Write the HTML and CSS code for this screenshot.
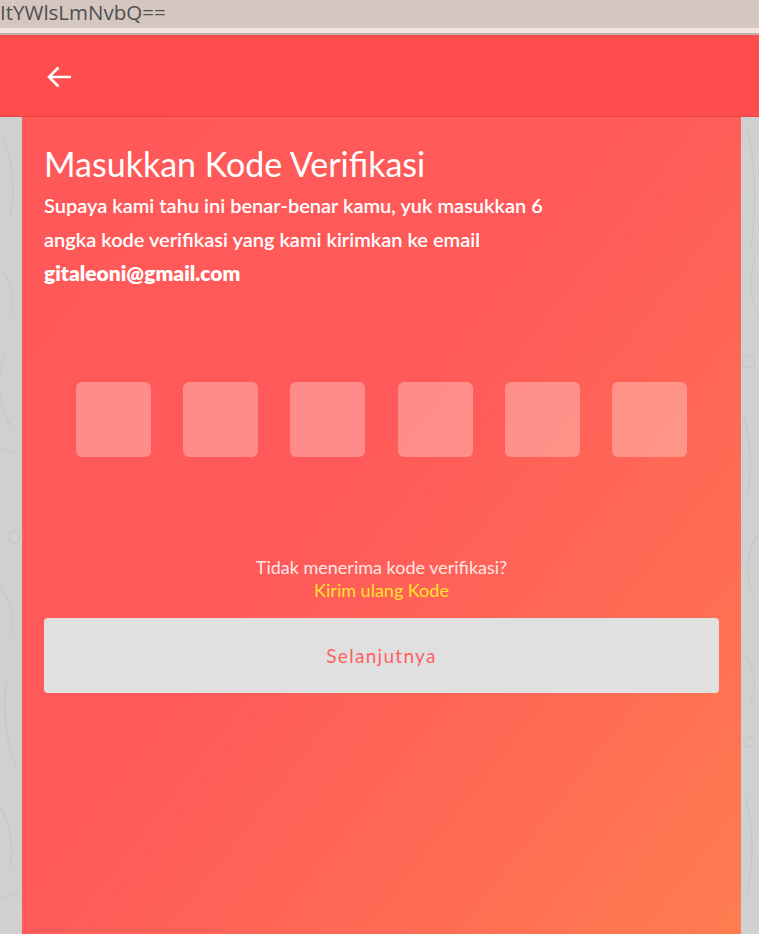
FILE: index.html
```html
<!DOCTYPE html>
<html lang="id">
<head>
<meta charset="utf-8">
<title>Masukkan Kode Verifikasi</title>
<link rel="stylesheet" href="styles.css">
</head>
<body>
<div class="urlbar">ItYWlsLmNvbQ==</div>
<div class="strip"></div>
<header class="header">
  <svg class="back" viewBox="0 0 26 24" width="26" height="24"><path d="M25 12H3M12.5 2.5L3 12l9.5 9.5" fill="none" stroke="#fff" stroke-width="2.6"/></svg>
</header>
<div class="page">
  <svg class="doodle doodle-left" width="22" height="820" viewBox="0 0 22 820" fill="none" stroke="#c7c7c7" stroke-width="1.4">
    <path d="M2 20c10 20 14 50 8 80"/>
    <path d="M-4 150c14 8 20 30 14 50"/>
    <path d="M4 240c-8 20-6 50 8 70"/>
    <path d="M0 330l14 6"/>
    <circle cx="14" cy="420" r="6"/>
    <path d="M-2 470c12 10 18 30 12 50"/>
    <path d="M8 560c-6 20-4 60 8 90"/>
    <path d="M0 690c10 14 14 40 10 60"/>
    <path d="M2 780l16 -4"/>
  </svg>
  <svg class="doodle doodle-right" width="18" height="820" viewBox="0 0 18 820" fill="none" stroke="#c7c7c7" stroke-width="1.4">
    <path d="M6 10c8 30 10 80 4 120"/>
    <path d="M14 140c-6 20-6 40 4 60"/>
    <circle cx="8" cy="245" r="6"/>
    <path d="M2 300c8 20 10 50 4 80"/>
    <path d="M16 420c-10 12-12 40-4 60"/>
    <path d="M4 540c10 10 12 30 6 46"/>
    <circle cx="8" cy="625" r="5"/>
    <path d="M4 680c8 24 10 60 2 96"/>
  </svg>
  <main class="card">
    <h1 class="title">Masukkan Kode Verifikasi</h1>
    <p class="desc">Supaya kami tahu ini benar-benar kamu, yuk masukkan 6 angka kode verifikasi yang kami kirimkan ke email <strong>gitaleoni@gmail.com</strong></p>
    <div class="otp">
      <span class="otp-box"></span>
      <span class="otp-box"></span>
      <span class="otp-box"></span>
      <span class="otp-box"></span>
      <span class="otp-box"></span>
      <span class="otp-box"></span>
    </div>
    <div class="resend">
      <p class="resend-q">Tidak menerima kode verifikasi?</p>
      <a class="resend-link">Kirim ulang Kode</a>
    </div>
    <button class="next">Selanjutnya</button>
  </main>
</div>
</body>
</html>
```
FILE: styles.css
```css
html, body {
  margin: 0;
  padding: 0;
  height: 100%;
  overflow: hidden;
}
body {
  font-family: "Lato", "Noto Sans", sans-serif;
  background: #d0d0d0;
  display: flex;
  flex-direction: column;
}
.urlbar {
  height: 28px;
  box-sizing: border-box;
  padding-top: 1px;
  background: #d5c6bf;
  color: #4f4f52;
  font-family: "Open Sans", sans-serif;
  font-size: 20.5px;
  line-height: 22px;
  white-space: nowrap;
}
.strip {
  height: 5px;
  background: #f6e4dc;
  border-bottom: 2px solid #bdaea8;
}
.header {
  height: 81px;
  background: #ff4c4c;
  border-bottom: 1px solid #e94444;
  display: flex;
  align-items: center;
  padding-left: 46px;
  flex-shrink: 0;
}
.back {
  display: block;
  margin-top: 2px;
}
.page {
  position: relative;
  flex: 1;
  display: flex;
  padding-left: 22px;
  background: #d0d0d0;
}
.doodle {
  position: absolute;
  top: 0;
}
.doodle-left { left: 0; }
.doodle-right { right: 0; }
.card {
  width: 719px;
  box-sizing: border-box;
  padding: 27px 22px 0;
  background: linear-gradient(128deg, #ff5858 0%, #ff5a59 45%, #ff6a55 72%, #ff7c50 100%);
  color: #fff;
}
.title {
  margin: 0;
  font-weight: 400;
  font-size: 34px;
  line-height: 40px;
}
.desc {
  margin: 4px 0 0;
  font-size: 20px;
  font-weight: 600;
  line-height: 34px;
  width: 520px;
}
.desc strong {
  font-size: 21px;
  font-weight: 800;
}
.otp {
  margin-top: 92px;
  display: flex;
  justify-content: space-evenly;
}
.otp-box {
  width: 75px;
  height: 75px;
  border-radius: 6px;
  background: rgba(255, 255, 255, 0.3);
}
.resend {
  margin-top: 99px;
  text-align: center;
  font-size: 18px;
  line-height: 23px;
}
.resend-q {
  margin: 0;
  color: #fde6e6;
}
.resend-link {
  color: #ffe22e;
}
.next {
  display: block;
  width: 100%;
  height: 75px;
  margin-top: 16px;
  border: none;
  border-radius: 4px;
  background: #e0e0e0;
  color: #ff5f5f;
  font-family: inherit;
  font-size: 19px;
  letter-spacing: 1.3px;
}
```
